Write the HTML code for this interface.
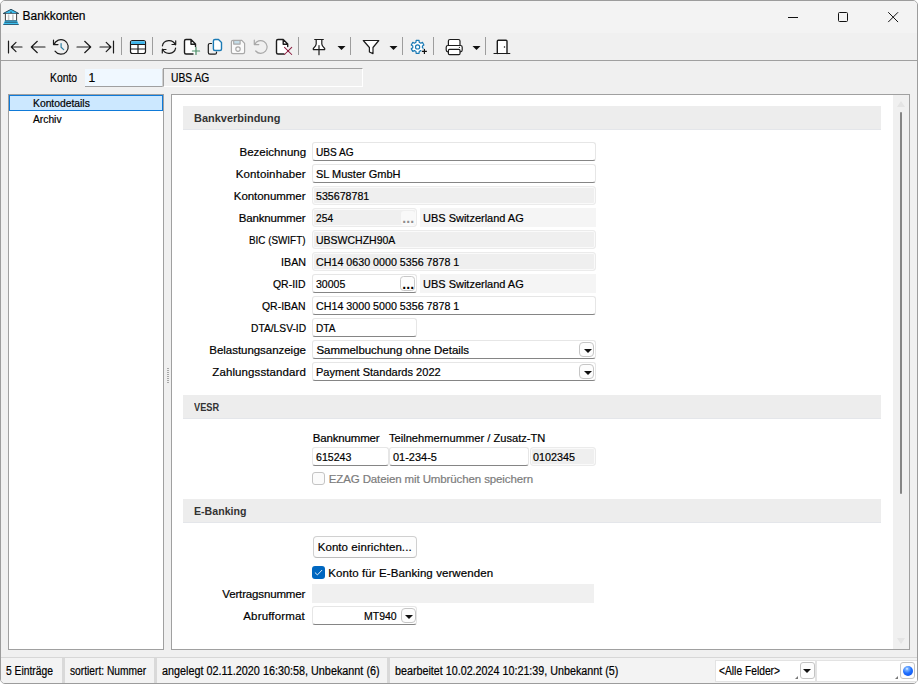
<!DOCTYPE html>
<html lang="de">
<head>
<meta charset="utf-8">
<title>Bankkonten</title>
<style>
html,body{margin:0;padding:0;background:#fff;}
body{width:918px;height:684px;overflow:hidden;position:relative;font-family:"Liberation Sans",sans-serif;color:#000;}
#win{position:absolute;left:0;top:0;width:916px;height:682px;border:1px solid #9c9c9c;border-radius:5px;background:#f0f0f0;overflow:hidden;}
.abs{position:absolute;}
.t,.lbl,.s{-webkit-text-stroke:0.2px currentColor;}
.t{position:absolute;white-space:nowrap;font-size:11.5px;line-height:19px;height:19px;margin-top:1px;}
.s{position:absolute;white-space:nowrap;font-size:11px;line-height:15px;height:15px;}
.lbl{position:absolute;white-space:nowrap;font-size:11.5px;line-height:19px;height:19px;margin-top:1px;}
#titlebar{position:absolute;left:0;top:0;width:916px;height:32px;background:#f3f3f3;}
#toolbar{position:absolute;left:0;top:32px;width:916px;height:27px;background:#f0f0f0;border-bottom:1px solid #a0a0a0;}
.sep{position:absolute;top:38px;width:1px;height:17px;background:#a6a6a6;}
.fld{position:absolute;box-sizing:border-box;height:19px;background:#fff;border:1px solid #e6e6e6;border-bottom:1px solid #858585;border-radius:3px;}
.dis{position:absolute;box-sizing:border-box;height:19px;background:#efefef;border:1px solid #ebebeb;border-radius:3px;box-shadow:inset 0 0 0 1px #fafafa;}
.ro{position:absolute;box-sizing:border-box;height:19px;background:#f5f5f5;}
.hdr{position:absolute;left:182px;width:698px;height:23px;background:#ededed;border-bottom:1px solid #e4e6ea;}
.hb{position:absolute;font-size:11.5px;font-weight:bold;line-height:23px;height:23px;color:#333;white-space:nowrap;}
.ddb{position:absolute;box-sizing:border-box;width:15px;height:15px;border:1px solid #c6c6c6;border-radius:4px;background:#fdfdfd;}
.ddb:after{content:"";position:absolute;left:3.600px;top:5.800px;border-left:4px solid transparent;border-right:4px solid transparent;border-top:4.400px solid #111;}
.dots{position:absolute;white-space:nowrap;font-size:14px;font-weight:bold;line-height:19px;height:19px;letter-spacing:0.11px;}
.tarr{position:absolute;width:0;height:0;border-left:3.5px solid transparent;border-right:3.5px solid transparent;border-top:4px solid #111;top:45px;}
.sbsep{position:absolute;top:657px;width:3px;height:25px;background:#d9d9d9;}
</style>
</head>
<body>
<div id="win">
<div id="titlebar"></div>
<span class="t" style="top:5px;font-size:12px;left:21.60px;letter-spacing:-0.056px">Bankkonten</span>
<div id="toolbar"></div>
<!-- Konto row -->
<span class="s" style="top:70px;font-size:12px;left:49.00px;transform:scaleX(0.8616);transform-origin:0 0">Konto</span>
<div class="abs" style="left:84px;top:68px;width:77px;height:17px;background:#f0f8ff;border-bottom:1px solid #a0a0a0;border-right:1px solid #d0d0d0"></div>
<span class="s" style="top:70px;font-size:12px;left:87.5px">1</span>
<div class="abs" style="left:162px;top:67px;width:198px;height:17px;border:1px solid #a0a0a0;border-right-color:#fff;border-bottom-color:#fff;background:#f0f0f0"></div>
<span class="s" style="top:70px;font-size:12px;left:169.70px;transform:scaleX(0.8576);transform-origin:0 0">UBS AG</span>

<!-- tree -->
<div class="abs" style="left:7px;top:93px;width:154px;height:554px;border:1px solid #a0a0a0;background:#fff"></div>
<div class="abs" style="left:8px;top:94px;width:152px;height:14px;border:1px solid #0f7ad8;background:#cce8ff"></div>
<span class="s" style="top:95px;left:32.00px;transform:scaleX(0.9387);transform-origin:0 0">Kontodetails</span>
<span class="s" style="top:111px;left:32.00px;transform:scaleX(0.9336);transform-origin:0 0">Archiv</span>

<!-- splitter grip -->
<div class="abs" style="left:166px;top:367px;width:2px;height:16px;background:repeating-linear-gradient(#a8a8a8 0 1px,#f0f0f0 1px 2px)"></div>

<!-- right panel -->
<div class="abs" style="left:170px;top:93px;width:737px;height:554px;border:1px solid #a0a0a0;background:#fff"></div>
<!-- scrollbar -->
<div class="abs" style="left:892px;top:94px;width:16px;height:554px;background:#f0f0f0"></div>
<div class="abs" style="left:899px;top:111px;width:2px;height:382px;background:#858585;border-radius:1px"></div>
<div class="abs" style="left:896px;top:100px;border-left:4px solid transparent;border-right:4px solid transparent;border-bottom:6px solid #e4e4e4"></div>
<div class="abs" style="left:896px;top:637px;border-left:4px solid transparent;border-right:4px solid transparent;border-top:6px solid #e4e4e4"></div>

<div class="hdr" style="top:105px"></div><span class="hb" style="top:106px;left:193.30px;transform:scaleX(0.9525);transform-origin:0 0">Bankverbindung</span>
<div class="hdr" style="top:394px"></div><span class="hb" style="top:395px;left:193.30px;transform:scaleX(0.8028);transform-origin:0 0">VESR</span>
<div class="hdr" style="top:498px"></div><span class="hb" style="top:499px;left:193.30px;transform:scaleX(0.9219);transform-origin:0 0">E-Banking</span>

<!-- labels -->
<span class="lbl" style="top:141px;left:238.50px;letter-spacing:0.010px">Bezeichnung</span>
<span class="lbl" style="top:163px;left:234.80px;letter-spacing:0.119px">Kontoinhaber</span>
<span class="lbl" style="top:185px;left:232.80px;letter-spacing:-0.050px">Kontonummer</span>
<span class="lbl" style="top:207px;left:237.80px;letter-spacing:-0.184px">Banknummer</span>
<span class="lbl" style="top:229px;left:248.30px;transform:scaleX(0.8580);transform-origin:0 0">BIC (SWIFT)</span>
<span class="lbl" style="top:251px;left:279.77px;transform:scaleX(0.9320);transform-origin:0 0">IBAN</span>
<span class="lbl" style="top:273px;left:272.30px;transform:scaleX(0.9078);transform-origin:0 0">QR-IID</span>
<span class="lbl" style="top:295px;left:261.30px;transform:scaleX(0.9073);transform-origin:0 0">QR-IBAN</span>
<span class="lbl" style="top:317px;left:249.70px;transform:scaleX(0.8915);transform-origin:0 0">DTA/LSV-ID</span>
<span class="lbl" style="top:339px;left:208.30px;letter-spacing:-0.037px">Belastungsanzeige</span>
<span class="lbl" style="top:361px;left:211.30px;letter-spacing:0.102px">Zahlungsstandard</span>
<span class="lbl" style="top:583px;left:221.30px;letter-spacing:-0.152px">Vertragsnummer</span>
<span class="lbl" style="top:605px;left:242.30px;letter-spacing:0.153px">Abrufformat</span>

<!-- fields -->
<div class="fld" style="left:311px;top:141px;width:284px"></div>
<span class="t" style="top:141px;left:315.40px;transform:scaleX(0.8802);transform-origin:0 0">UBS AG</span>
<div class="fld" style="left:311px;top:163px;width:284px"></div>
<span class="t" style="top:163px;left:315.40px;transform:scaleX(0.9557);transform-origin:0 0">SL Muster GmbH</span>
<div class="dis" style="left:311px;top:185px;width:284px"></div>
<span class="t" style="top:185px;left:315.40px;transform:scaleX(0.9254);transform-origin:0 0">535678781</span>
<div class="dis" style="left:311px;top:207px;width:104.500px"></div>
<span class="t" style="top:207px;left:315.40px;transform:scaleX(0.8893);transform-origin:0 0">254</span>
<div class="abs" style="left:400px;top:210px;width:14px;height:14px;background:#f9f9f9;border-radius:3px"></div>
<span class="dots" style="left:401.3px;top:208px;color:#8e8e8e">...</span>
<div class="ro" style="left:419px;top:207px;width:176px"></div>
<span class="t" style="top:207px;left:422.30px;transform:scaleX(0.9553);transform-origin:0 0">UBS Switzerland AG</span>
<div class="dis" style="left:311px;top:229px;width:284px"></div>
<span class="t" style="top:229px;left:315.40px;transform:scaleX(0.9125);transform-origin:0 0">UBSWCHZH90A</span>
<div class="dis" style="left:311px;top:251px;width:284px"></div>
<span class="t" style="top:251px;left:315.40px;transform:scaleX(0.9297);transform-origin:0 0">CH14 0630 0000 5356 7878 1</span>
<div class="fld" style="left:311px;top:273px;width:104.500px"></div>
<span class="t" style="top:273px;left:315.40px;transform:scaleX(0.9150);transform-origin:0 0">30005</span>
<div class="abs" style="left:399.300px;top:275px;width:12.400px;height:13px;background:#fdfdfd;border:1px solid #c8c8c8;border-radius:3.500px"></div>
<span class="dots" style="left:401.3px;top:274px;color:#000">...</span>
<div class="ro" style="left:419px;top:273px;width:176px"></div>
<span class="t" style="top:273px;left:422.30px;transform:scaleX(0.9553);transform-origin:0 0">UBS Switzerland AG</span>
<div class="fld" style="left:311px;top:295px;width:284px"></div>
<span class="t" style="top:295px;left:315.40px;transform:scaleX(0.9297);transform-origin:0 0">CH14 3000 5000 5356 7878 1</span>
<div class="fld" style="left:311px;top:317px;width:104.500px"></div>
<span class="t" style="top:317px;left:315.30px;transform:scaleX(0.8765);transform-origin:0 0">DTA</span>
<div class="fld" style="left:311px;top:339px;width:284px"></div>
<span class="t" style="top:339px;left:315.40px;letter-spacing:-0.031px">Sammelbuchung ohne Details</span>
<div class="ddb" style="left:578px;top:341px"></div>
<div class="fld" style="left:311px;top:361px;width:284px"></div>
<span class="t" style="top:361px;left:315.40px;transform:scaleX(0.9607);transform-origin:0 0">Payment Standards 2022</span>
<div class="ddb" style="left:578px;top:363px"></div>

<!-- VESR -->
<span class="t" style="top:427px;left:311.80px;letter-spacing:-0.173px">Banknummer</span>
<span class="t" style="top:427px;left:388.30px;transform:scaleX(0.9667);transform-origin:0 0">Teilnehmernummer / Zusatz-TN</span>
<div class="fld" style="left:311px;top:446px;width:76.800px"></div>
<span class="t" style="top:446px;left:315.30px;transform:scaleX(0.9216);transform-origin:0 0">615243</span>
<div class="fld" style="left:388.400px;top:446px;width:139.200px"></div>
<span class="t" style="top:446px;left:392.30px;transform:scaleX(0.9532);transform-origin:0 0">01-234-5</span>
<div class="dis" style="left:528.5px;top:446px;width:66px"></div>
<span class="t" style="top:446px;left:532.00px;transform:scaleX(0.9352);transform-origin:0 0">0102345</span>
<div class="abs" style="left:311px;top:471px;width:11px;height:11px;border:1px solid #c4c4c4;border-radius:3px;background:#fbfbfb"></div>
<span class="t" style="top:468px;color:#7c7c7c;left:327.70px;letter-spacing:-0.113px">EZAG Dateien mit Umbrüchen speichern</span>

<!-- E-Banking -->
<div class="abs" style="left:312px;top:535px;width:102px;height:20px;border:1px solid #d0d0d0;border-bottom-color:#bcbcbc;border-radius:4px;background:#fdfdfd"></div>
<span class="t" style="top:536px;left:316.70px;letter-spacing:0.067px">Konto einrichten...</span>
<div class="abs" style="left:311px;top:565px;width:13px;height:13px;border-radius:3px;background:#0067c0"></div>
<svg class="abs" style="left:311px;top:565px" width="13" height="13" viewBox="0 0 13 13"><path d="M3.200 6.800 L5.400 8.900 L9.800 4.300" stroke="#e9f2fb" stroke-width="0.950" fill="none" stroke-linecap="round" stroke-linejoin="round"/></svg>
<span class="t" style="top:562px;left:327.30px;letter-spacing:0.086px">Konto für E-Banking verwenden</span>
<div class="abs" style="left:311px;top:583px;width:282px;height:19px;background:#f0f0f0"></div>
<div class="fld" style="left:311px;top:605px;width:104.500px"></div>
<span class="t" style="top:605px;left:362.70px;transform:scaleX(0.9125);transform-origin:0 0">MT940</span>
<div class="ddb" style="left:399.500px;top:607px"></div>

<!-- status bar -->
<div class="abs" style="left:0;top:656px;width:916px;height:1px;background:#d7d7d7"></div>
<div class="abs" style="left:0;top:657px;width:916px;height:25px;background:#f3f3f3"></div>
<div class="sbsep" style="left:61px"></div>
<div class="sbsep" style="left:152.5px"></div>
<div class="sbsep" style="left:385.7px"></div>
<span class="s" style="top:663px;font-size:12px;left:5.00px;transform:scaleX(0.8595);transform-origin:0 0">5 Einträge</span>
<span class="s" style="top:663px;font-size:12px;left:68.90px;transform:scaleX(0.8517);transform-origin:0 0">sortiert: Nummer</span>
<span class="s" style="top:663px;font-size:12px;left:161.00px;transform:scaleX(0.9018);transform-origin:0 0">angelegt 02.11.2020 16:30:58, Unbekannt (6)</span>
<span class="s" style="top:663px;font-size:12px;left:394.10px;transform:scaleX(0.8949);transform-origin:0 0">bearbeitet 10.02.2024 10:21:39, Unbekannt (5)</span>
<div class="abs" style="left:714px;top:659px;width:99px;height:20px;background:#fff;border:1px solid #e3e3e3"></div>
<span class="s" style="top:663px;font-size:12px;left:717.70px;transform:scaleX(0.8548);transform-origin:0 0">&lt;Alle Felder&gt;</span>
<div class="abs" style="left:799px;top:661px;width:13px;height:15px;border:1px solid #c4c4c4;border-radius:3px;background:#fdfdfd"></div>
<div class="abs" style="left:802px;top:668px;border-left:4px solid transparent;border-right:4px solid transparent;border-top:4.500px solid #111"></div>
<div class="abs" style="left:815px;top:659px;width:101px;height:20px;background:#fff;border:1px solid #e3e3e3;border-right:0"></div>
<div class="abs" style="left:899px;top:661px;width:13px;height:15px;border:1px solid #c4c4c4;border-radius:3px;background:#fdfdfd"></div>
<div class="abs" style="left:901.900px;top:665px;width:10px;height:10px;border-radius:50%;background:radial-gradient(circle at 40% 28%,#fff 0,#7db4ff 14%,#1e6fff 48%,#0a48e6 100%)"></div>
<div class="abs" style="left:794px;top:675px;border-left:3.500px solid transparent;border-bottom:3.500px solid #777"></div>
<div class="abs" style="left:894px;top:675px;border-left:3.500px solid transparent;border-bottom:3.500px solid #777"></div>
<svg class="abs" style="left:-1px;top:-1px;pointer-events:none" width="918" height="684" viewBox="0 0 918 684" fill="none" stroke="#1c1c1c" stroke-width="1.2" stroke-linecap="round" stroke-linejoin="round">
<g stroke-width="1">
<path d="M3.6 13.3 L11 9.3 L18.400 13.3 Z" fill="#3cc0f0" stroke="#2b4a5c"/>
<rect x="5.300" y="13.800" width="11.400" height="6.800" fill="#fff" stroke="none"/>
<path d="M5.400 13.800 V20.600 M16.600 13.800 V20.600" stroke="#444"/>
<path d="M8.600 14.500 V20 M12.900 14.500 V20" stroke="#c6c6c6" stroke-width="1.600" stroke-linecap="butt"/>
<path d="M5 20.600 H17 L18.800 24.800 H3.200 Z" fill="#3cc0f0" stroke="none"/>
<path d="M4.600 22.300 H17.400 M3.300 24.500 H18.700 M5 20.800 H17" stroke="#2b5f7a" stroke-linecap="butt"/>
<circle cx="11" cy="12.300" r="0.700" fill="#333" stroke="none"/>
</g>
<g stroke="#111" stroke-width="1" stroke-linecap="butt">
<path d="M788 17.500 H798"/>
<rect x="838.500" y="12.500" width="9" height="9" rx="1"/>
<path d="M888.500 12.500 L897.800 21.800 M897.800 12.500 L888.500 21.800" stroke-linecap="round"/>
</g>
<rect x="121" y="37" width="1" height="18" fill="#9d9d9d" stroke="none"/>
<rect x="152" y="37" width="1" height="18" fill="#9d9d9d" stroke="none"/>
<rect x="298" y="37" width="1" height="18" fill="#9d9d9d" stroke="none"/>
<rect x="350" y="37" width="1" height="18" fill="#9d9d9d" stroke="none"/>
<rect x="402" y="37" width="1" height="18" fill="#9d9d9d" stroke="none"/>
<rect x="433" y="37" width="1" height="18" fill="#9d9d9d" stroke="none"/>
<rect x="485" y="37" width="1" height="18" fill="#9d9d9d" stroke="none"/>
<polygon points="337.5,46 345.5,46 341.5,50" fill="#111" stroke="none"/>
<polygon points="389.5,46 397.5,46 393.5,50" fill="#111" stroke="none"/>
<polygon points="472.5,46 480.5,46 476.5,50" fill="#111" stroke="none"/>
<path d="M8.500 41 V53"/>
<path d="M11.500 47 H22 M16 42.300 L11.300 47 L16 51.700"/>
<path d="M31.300 47 H45 M37.300 41.300 L31.300 47 L37.300 52.700"/>
<path d="M53.950 44.700 A7.300 7.300 0 1 1 55 51.200 M53.500 40.200 V44.600 H58"/>
<path d="M61.100 43.500 V47.200 L63.700 49.600" stroke="#2f7fa3"/>
<path d="M77 47 H90.700 M84.700 41.300 L90.700 47 L84.700 52.700"/>
<path d="M100 47 H110.700 M106.200 42.300 L110.900 47 L106.200 51.700"/>
<path d="M113.500 41 V53"/>
<rect x="130.500" y="40.500" width="15" height="13" rx="2" fill="#fff"/>
<rect x="131.200" y="41.200" width="13.600" height="3" fill="#3db4ea" stroke="none"/>
<path d="M130.500 44.500 H145.500 M131 49 H145 M138 45 V53" stroke-linecap="butt"/>
<path d="M162.400 45.900 A6.700 6.300 0 0 1 175.300 44.860 M175.700 40.800 V44.500 H172"/>
<path d="M175.600 48.100 A6.700 6.300 0 0 1 162.700 49.140 M162.300 53 V49.500 H166"/>
<path d="M193 54 H186 Q184.500 54 184.500 52.500 V41 Q184.500 39.500 186 39.500 H191 L195.500 44 V54 Z" fill="#fff" stroke="none"/>
<path d="M193 54 H186 Q184.500 54 184.500 52.500 V41 Q184.500 39.500 186 39.500 H191 L195.500 44 V46.500 M191 39.500 V44.300 H195.500" fill="none" stroke-width="1.400"/>
<path d="M196 47.400 V54.500 M192.400 51 H199.600" stroke="#4a9068" stroke-width="1.200"/>
<path d="M211.500 43.500 H210 Q208.300 43.500 208.300 45 V52.500 Q208.300 54.200 210 54.200 H215 Q216.500 54.200 216.500 52.700 V52"/>
<path d="M215 39.500 H218.500 L221.500 42.500 V49 Q221.500 50.500 220 50.500 H215 Q213.400 50.500 213.400 49 V41 Q213.400 39.500 215 39.500 Z" stroke="#1a7ab5" fill="#fff" stroke-width="1.400"/>
<g stroke="#a9a9a9">
<path d="M233 40.300 H241.800 L244.600 43.300 V52 Q244.600 53.600 243 53.600 H233 Q231.400 53.600 231.400 52 V42 Q231.400 40.300 233 40.300 Z" fill="#fafafa"/>
<rect x="233.700" y="40.500" width="6.400" height="3.600" fill="#c5dde8"/>
<circle cx="238" cy="49.100" r="2.200"/>
</g>
<path d="M254.700 44.700 A6.400 6.400 0 1 1 255.700 51 M254.300 40.200 V44.600 H258.800" stroke="#a9a9a9"/>
<path d="M284 54 H278 Q276.500 54 276.500 52.500 V41 Q276.500 39.500 278 39.500 H283.200 L287.700 44 V54 Z" fill="#fff" stroke="none"/>
<path d="M284 54 H278 Q276.500 54 276.500 52.500 V41 Q276.500 39.500 278 39.500 H283.200 L287.700 44 V46.500 M283.200 39.500 V44.300 H287.700" stroke-width="1.400"/>
<path d="M284.500 47.300 L291.700 54.500 M291.700 47.300 L284.500 54.500" stroke="#8c1d40" stroke-width="1.050"/>
<path d="M316.200 39.500 V44 Q316.200 46 313.300 48.500 V49.600 H324.700 V48.500 Q321.800 46 321.800 44 V39.500 Z" fill="#fff"/>
<path d="M314.700 39.500 H323.300 M319 45.600 V54.700"/>
<path d="M363.300 40.500 H378.800 L373 47.500 V53.600 L369.400 52 V47.500 Z" fill="#fff"/>
<path d="M419.20 42.27 L419.08 40.47 L416.12 40.47 L416.00 42.27 L414.39 43.20 L412.77 42.40 L411.29 44.97 L412.79 45.97 L412.79 47.83 L411.29 48.83 L412.77 51.40 L414.39 50.60 L416.00 51.53 L416.12 53.33 L419.08 53.33 L419.20 51.53 L420.81 50.60 L422.43 51.40 L423.91 48.83 L422.41 47.83 L422.41 45.97 L423.91 44.97 L422.43 42.40 L420.81 43.20 Z" stroke="#1a7ab5" fill="#fff"/>
<circle cx="417.600" cy="46.900" r="2.100" stroke="#1a7ab5"/>
<path d="M424.400 48.500 V54.400 M421.400 51.400 H427.400" stroke="#f0f0f0" stroke-width="3.200" stroke-linecap="butt"/>
<path d="M424.400 49 V53.900 M422 51.400 H426.900" stroke="#111" stroke-linecap="butt"/>
<path d="M448.400 45.600 V41 Q448.400 39.500 450 39.500 H458.400 Q460 39.500 460 41 V45.600" fill="#fff"/>
<rect x="446.200" y="45.500" width="16" height="6.300" rx="1.800" fill="#fff"/>
<rect x="448.400" y="49.400" width="11.600" height="5.200" rx="1.200" fill="#fff"/>
<circle cx="459.400" cy="47.300" r="0.600" fill="#111" stroke="none"/>
<path d="M497.300 53.500 V41.300 Q497.300 40.300 498.300 40.300 H506 Q507 40.300 507 41.300 V53.500" fill="#fff" stroke-width="1.400"/>
<path d="M494 53.500 H509.800"/>
<circle cx="504.500" cy="47" r="0.750" fill="#111" stroke="none"/>
</svg>
</div>
</body>
</html>
